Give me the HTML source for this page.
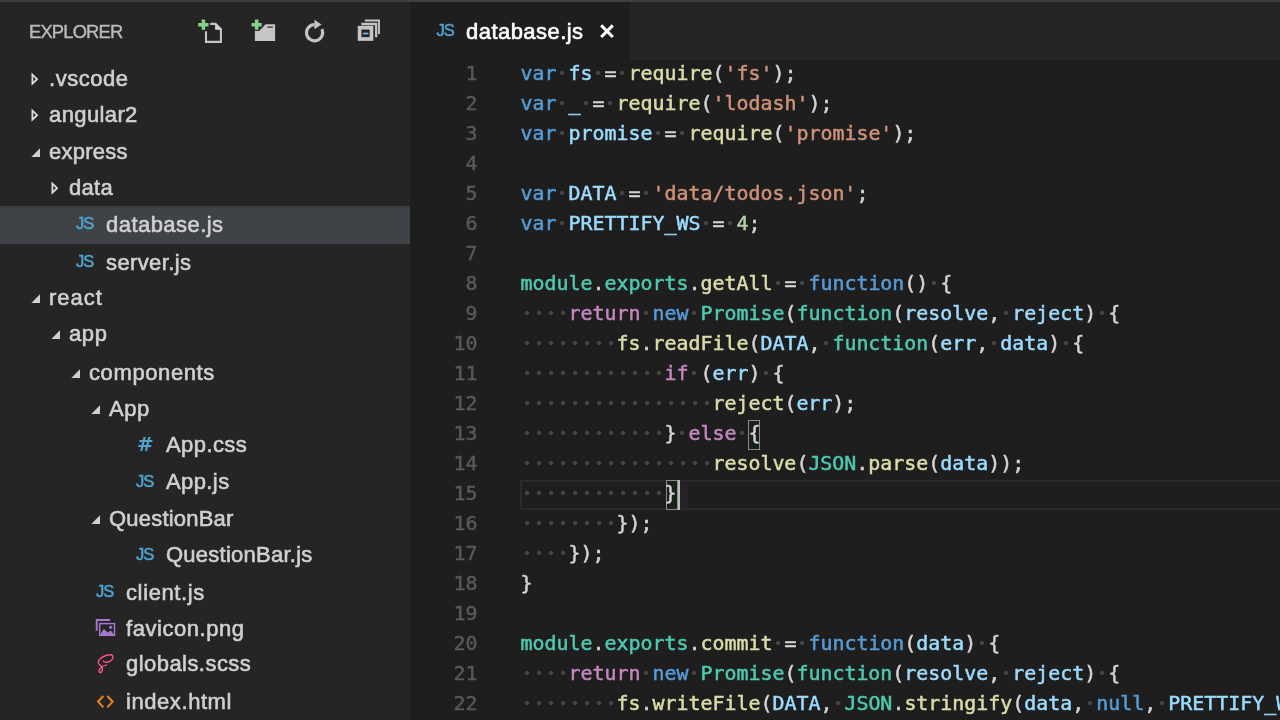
<!DOCTYPE html>
<html lang="en">
<head>
<meta charset="utf-8">
<title>database.js - Visual Studio Code</title>
<style>
*{box-sizing:border-box;margin:0;padding:0}
html,body{width:1280px;height:720px;overflow:hidden;background:#1e1e1e}
body{will-change:transform;position:relative;font-family:"Liberation Sans",sans-serif;color:#d4d4d4}
#topbar{position:absolute;left:0;top:0;width:1280px;height:2.1px;background:#3f3f3e}
#sidebar{position:absolute;left:0;top:2px;width:410px;height:718px;background:#252526;overflow:hidden}
#explorer-title{position:absolute;left:29px;top:19px;font-size:18.33px;line-height:22px;letter-spacing:-0.8px;color:#bbbbbb;-webkit-text-stroke:0.4px #bbbbbb}
.row{position:absolute;left:0;width:410px;height:36.67px;line-height:36.67px;font-size:22px;color:#d0d0d0;white-space:nowrap}
#selrow{position:absolute;left:0;top:203.8px;width:410px;height:38.1px;background:#3f4246;border-top:2.2px solid #3c3c3c}
.row .lbl{position:absolute;top:0;-webkit-text-stroke:0.6px #d0d0d0}
.row svg{position:absolute}
.ficon{position:absolute;top:-1.5px;font-size:16.5px;letter-spacing:-1px;color:#4fa3d1;-webkit-text-stroke:0.5px #4fa3d1}
#tabs{position:absolute;left:410px;top:2px;width:870px;height:57.7px;background:#252526}
#tab{position:absolute;left:0;top:0;width:220.3px;height:58px;background:#1e1e1e}
#tab .name{position:absolute;left:56px;top:0.5px;line-height:58px;font-size:22px;letter-spacing:0.46px;color:#ffffff;white-space:nowrap;-webkit-text-stroke:0.6px #ffffff}
#tab .js{position:absolute;left:26.5px;top:0;line-height:57px;font-size:16.5px;color:#4fa3d1;letter-spacing:-1px;-webkit-text-stroke:0.5px #4fa3d1}
#editor{position:absolute;left:410px;top:60px;width:870px;height:660px;background:#1e1e1e;overflow:hidden;font-family:"DejaVu Sans Mono","Liberation Mono",monospace;font-size:19.93px}
.ln{-webkit-text-stroke:0.4px;position:absolute;left:0;width:67.5px;text-align:right;height:30px;line-height:30px;color:#5a5a5a}
.cl{position:absolute;left:110.5px;height:30px;line-height:30px;white-space:pre;color:#d4d4d4;-webkit-text-stroke:0.5px}
.k{color:#569cd6}.v{color:#9cdcfe}.f{color:#dcdcaa}.s{color:#ce9178}.n{color:#b5cea8}.c{color:#c586c0}.t{color:#4ec9b0}.w{background:radial-gradient(circle at 6px 14px,#464646 1.6px,rgba(70,70,70,0) 2.6px) 0 0/12px 30px repeat-x;display:inline-block;height:30px;vertical-align:top}
#curline{position:absolute;left:110px;top:420px;width:780px;height:30px;border:2.1px solid #2a2a2d}
.bm{position:absolute;width:12.1px;height:30px;border:1.9px solid #8c8c88;background:#18221a}
#cursor{position:absolute;width:2.1px;height:30px;background:#bdbdba}
</style>
</head>
<body>
<div id="topbar"></div>
<div id="sidebar">
<div id="explorer-title">EXPLORER</div>
<div id="selrow"></div>

<svg style="position:absolute;left:190px;top:12px" width="200" height="36" viewBox="190 14 200 36">
<!-- new file -->
<path d="M210.2 23.9 H215.6 L220.9 29.2 V41.9 H206 V31.2" fill="none" stroke="#c5c5c5" stroke-width="2.1"/>
<path d="M215.1 23.6 V29.8 H221.5 Z" fill="#d6d6d6"/>
<path d="M203.4 19.6 V29.8 M198.2 24.7 H208.5" stroke="#89d185" stroke-width="3.5"/>
<!-- new folder -->
<path d="M254.9 41 V30.4 H259.6 L265.6 24.2 H275.1 V41 Z" fill="#c5c5c5"/>
<rect x="267.3" y="26.4" width="5.6" height="1.5" fill="#4a4a4a"/>
<path d="M256.7 18.6 V30.8 M250.7 24.7 H262.7" stroke="#252526" stroke-width="5.5"/>
<path d="M256.7 19.6 V29.8 M251.6 24.7 H261.7" stroke="#89d185" stroke-width="3.5"/>
<!-- refresh -->
<path d="M314.6 24.6 A8.1 8.1 0 1 0 321.9 29.2" fill="none" stroke="#c5c5c5" stroke-width="3.1"/>
<path d="M314.5 19.8 L321.5 24.4 L314.5 29.2 Z" fill="#c5c5c5"/>
<!-- collapse all -->
<path d="M364.9 20.5 H379 V34.1" fill="none" stroke="#c5c5c5" stroke-width="1.9"/>
<path d="M361.3 24 H376.2 V37.2" fill="none" stroke="#c5c5c5" stroke-width="2.3"/>
<rect x="359.6" y="27.7" width="11.9" height="11.3" fill="#252526" stroke="#c5c5c5" stroke-width="3.7"/>
<rect x="363" y="32.7" width="5.3" height="1.6" fill="#75beff"/>
</svg>

<svg style="position:absolute;left:90px;top:608px" width="30" height="110" viewBox="90 610 30 110">
<!-- image -->
<path d="M96.7 630.8 V620 H110" fill="none" stroke="#a678d0" stroke-width="1.9"/>
<rect x="99.7" y="623.6" width="14.8" height="11.7" fill="none" stroke="#a678d0" stroke-width="1.5"/>
<path d="M99.7 635.3 L103.8 629 L107.7 632.6 L110.7 630.6 L114.5 635.3 Z" fill="#a678d0"/>
<circle cx="110.6" cy="627.2" r="1.55" fill="#a678d0"/>
<!-- sass -->
<path d="M103.4 661.3 C105 662.8 109 662.5 111.4 660.3 C113.5 658.3 113.5 655.8 111.5 655 C108.5 654 103 656 100 659 C97.5 661.5 97.8 663 99.5 664.5 C101.5 666.3 103 668 102.4 670 C101.8 672 100.5 672.8 99.7 672.4 C98.5 671.8 98.8 669.8 100.6 667.9 C102 666.4 104.5 665.3 106.5 665.1" fill="none" stroke="#f2548c" stroke-width="1.4" stroke-linecap="round"/>
<!-- html -->
<path d="M103.3 696 L98.1 701.6 L103.3 707.4 M107.3 696 L112.6 701.6 L107.3 707.4" fill="none" stroke="#ee8422" stroke-width="2"/>
</svg>

<div class="row" style="top:58.92px"><svg style="left:29px;top:10.3px" width="12" height="16" viewBox="0 0 12 16"><path d="M3.4 3.7 L8.1 8.2 L3.4 12.7 Z" fill="none" stroke="#dcdcdc" stroke-width="1.8" stroke-linejoin="miter"/></svg><span class="lbl" style="left:49px;letter-spacing:0.54px">.vscode</span></div>
<div class="row" style="top:94.92px"><svg style="left:29px;top:10.3px" width="12" height="16" viewBox="0 0 12 16"><path d="M3.4 3.7 L8.1 8.2 L3.4 12.7 Z" fill="none" stroke="#dcdcdc" stroke-width="1.8" stroke-linejoin="miter"/></svg><span class="lbl" style="left:49px;letter-spacing:0.39px">angular2</span></div>
<div class="row" style="top:132.17px"><svg style="left:28px;top:12px" width="14" height="14" viewBox="0 0 14 14"><path d="M12 2.3 L12 11 L3.3 11 Z" fill="#d0d0d0"/></svg><span class="lbl" style="left:49px;letter-spacing:0.25px">express</span></div>
<div class="row" style="top:168.17px"><svg style="left:49px;top:10.3px" width="12" height="16" viewBox="0 0 12 16"><path d="M3.4 3.7 L8.1 8.2 L3.4 12.7 Z" fill="none" stroke="#dcdcdc" stroke-width="1.8" stroke-linejoin="miter"/></svg><span class="lbl" style="left:69px;letter-spacing:0.30px">data</span></div>
<div class="row" style="top:204.77px"><span class="ficon" style="left:76px">JS</span><span class="lbl" style="left:106px;letter-spacing:0.46px">database.js</span></div>
<div class="row" style="top:242.77px"><span class="ficon" style="left:76px">JS</span><span class="lbl" style="left:106px;letter-spacing:0.39px">server.js</span></div>
<div class="row" style="top:278.42px"><svg style="left:28px;top:12px" width="14" height="14" viewBox="0 0 14 14"><path d="M12 2.3 L12 11 L3.3 11 Z" fill="#d0d0d0"/></svg><span class="lbl" style="left:49px;letter-spacing:1.00px">react</span></div>
<div class="row" style="top:314.42px"><svg style="left:48px;top:12px" width="14" height="14" viewBox="0 0 14 14"><path d="M12 2.3 L12 11 L3.3 11 Z" fill="#d0d0d0"/></svg><span class="lbl" style="left:69px;letter-spacing:0.62px">app</span></div>
<div class="row" style="top:352.67px"><svg style="left:68px;top:12px" width="14" height="14" viewBox="0 0 14 14"><path d="M12 2.3 L12 11 L3.3 11 Z" fill="#d0d0d0"/></svg><span class="lbl" style="left:89px;letter-spacing:0.61px">components</span></div>
<div class="row" style="top:388.67px"><svg style="left:88px;top:12px" width="14" height="14" viewBox="0 0 14 14"><path d="M12 2.3 L12 11 L3.3 11 Z" fill="#d0d0d0"/></svg><span class="lbl" style="left:109px;letter-spacing:0.50px">App</span></div>
<div class="row" style="top:424.92px"><span class="ficon" style="left:137.0px;top:-1px;font-family:'DejaVu Sans','Liberation Sans',sans-serif;font-weight:bold;font-size:20px;letter-spacing:0;-webkit-text-stroke:0">#</span><span class="lbl" style="left:166px;letter-spacing:0.42px">App.css</span></div>
<div class="row" style="top:462.42px"><span class="ficon" style="left:136px">JS</span><span class="lbl" style="left:166px;letter-spacing:0.40px">App.js</span></div>
<div class="row" style="top:498.67px"><svg style="left:88px;top:12px" width="14" height="14" viewBox="0 0 14 14"><path d="M12 2.3 L12 11 L3.3 11 Z" fill="#d0d0d0"/></svg><span class="lbl" style="left:109px;letter-spacing:0.20px">QuestionBar</span></div>
<div class="row" style="top:535.17px"><span class="ficon" style="left:136px">JS</span><span class="lbl" style="left:166px;letter-spacing:0.25px">QuestionBar.js</span></div>
<div class="row" style="top:572.67px"><span class="ficon" style="left:96px">JS</span><span class="lbl" style="left:126px;letter-spacing:0.62px">client.js</span></div>
<div class="row" style="top:608.67px"><span class="lbl" style="left:126px;letter-spacing:0.55px">favicon.png</span></div>
<div class="row" style="top:644.17px"><span class="lbl" style="left:126px;letter-spacing:0.45px">globals.scss</span></div>
<div class="row" style="top:681.92px"><span class="lbl" style="left:126px;letter-spacing:0.57px">index.html</span></div>
</div>
<div id="tabs"><div id="tab"><span class="js">JS</span><span class="name">database.js</span><svg style="position:absolute;left:189px;top:21px" width="16" height="16" viewBox="0 0 16 16"><path d="M2.2 2.4 L13.8 14 M13.8 2.4 L2.2 14" stroke="#ffffff" stroke-width="3.1"/></svg></div></div>
<div id="editor">
<div id="curline" style="top:420px"></div>
<div class="bm" style="left:338.0px;top:360.0px"></div>
<div class="bm" style="left:255.8px;top:420.0px"></div>
<div class="ln" style="top:-1px">1</div>
<div class="cl" style="top:-1px"><span class="k">var</span><span class="w"> </span><span class="v">fs</span><span class="w"> </span>=<span class="w"> </span><span class="f">require</span>(<span class="s">'fs'</span>);</div>
<div class="ln" style="top:29px">2</div>
<div class="cl" style="top:29px"><span class="k">var</span><span class="w"> </span><span class="v">_</span><span class="w"> </span>=<span class="w"> </span><span class="f">require</span>(<span class="s">'lodash'</span>);</div>
<div class="ln" style="top:59px">3</div>
<div class="cl" style="top:59px"><span class="k">var</span><span class="w"> </span><span class="v">promise</span><span class="w"> </span>=<span class="w"> </span><span class="f">require</span>(<span class="s">'promise'</span>);</div>
<div class="ln" style="top:89px">4</div>
<div class="ln" style="top:119px">5</div>
<div class="cl" style="top:119px"><span class="k">var</span><span class="w"> </span><span class="v">DATA</span><span class="w"> </span>=<span class="w"> </span><span class="s">'data/todos.json'</span>;</div>
<div class="ln" style="top:149px">6</div>
<div class="cl" style="top:149px"><span class="k">var</span><span class="w"> </span><span class="v">PRETTIFY_WS</span><span class="w"> </span>=<span class="w"> </span><span class="n">4</span>;</div>
<div class="ln" style="top:179px">7</div>
<div class="ln" style="top:209px">8</div>
<div class="cl" style="top:209px"><span class="t">module</span>.<span class="t">exports</span>.<span class="f">getAll</span><span class="w"> </span>=<span class="w"> </span><span class="k">function</span>()<span class="w"> </span>{</div>
<div class="ln" style="top:239px">9</div>
<div class="cl" style="top:239px"><span class="w">    </span><span class="c">return</span><span class="w"> </span><span class="k">new</span><span class="w"> </span><span class="t">Promise</span>(<span class="t">function</span>(<span class="v">resolve</span>,<span class="w"> </span><span class="v">reject</span>)<span class="w"> </span>{</div>
<div class="ln" style="top:269px">10</div>
<div class="cl" style="top:269px"><span class="w">        </span><span class="f">fs</span>.<span class="f">readFile</span>(<span class="v">DATA</span>,<span class="w"> </span><span class="t">function</span>(<span class="v">err</span>,<span class="w"> </span><span class="v">data</span>)<span class="w"> </span>{</div>
<div class="ln" style="top:299px">11</div>
<div class="cl" style="top:299px"><span class="w">            </span><span class="c">if</span><span class="w"> </span>(<span class="v">err</span>)<span class="w"> </span>{</div>
<div class="ln" style="top:329px">12</div>
<div class="cl" style="top:329px"><span class="w">                </span><span class="f">reject</span>(<span class="v">err</span>);</div>
<div class="ln" style="top:359px">13</div>
<div class="cl" style="top:359px"><span class="w">            </span>}<span class="w"> </span><span class="c">else</span><span class="w"> </span>{</div>
<div class="ln" style="top:389px">14</div>
<div class="cl" style="top:389px"><span class="w">                </span><span class="f">resolve</span>(<span class="t">JSON</span>.<span class="f">parse</span>(<span class="v">data</span>));</div>
<div class="ln" style="top:419px">15</div>
<div class="cl" style="top:419px"><span class="w">            </span>}</div>
<div class="ln" style="top:449px">16</div>
<div class="cl" style="top:449px"><span class="w">        </span>});</div>
<div class="ln" style="top:479px">17</div>
<div class="cl" style="top:479px"><span class="w">    </span>});</div>
<div class="ln" style="top:509px">18</div>
<div class="cl" style="top:509px">}</div>
<div class="ln" style="top:539px">19</div>
<div class="ln" style="top:569px">20</div>
<div class="cl" style="top:569px"><span class="t">module</span>.<span class="t">exports</span>.<span class="f">commit</span><span class="w"> </span>=<span class="w"> </span><span class="k">function</span>(<span class="v">data</span>)<span class="w"> </span>{</div>
<div class="ln" style="top:599px">21</div>
<div class="cl" style="top:599px"><span class="w">    </span><span class="c">return</span><span class="w"> </span><span class="k">new</span><span class="w"> </span><span class="t">Promise</span>(<span class="t">function</span>(<span class="v">resolve</span>,<span class="w"> </span><span class="v">reject</span>)<span class="w"> </span>{</div>
<div class="ln" style="top:629px">22</div>
<div class="cl" style="top:629px"><span class="w">        </span><span class="f">fs</span>.<span class="f">writeFile</span>(<span class="v">DATA</span>,<span class="w"> </span><span class="t">JSON</span>.<span class="f">stringify</span>(<span class="v">data</span>,<span class="w"> </span><span class="k">null</span>,<span class="w"> </span><span class="v">PRETTIFY_WS</span>),</div>
<div style="position:absolute;left:270px;top:423.4px;width:7.8px;height:24.6px;background:#232326"></div>
<div id="cursor" style="left:267.9px;top:420.0px"></div>
</div>
</body>
</html>
